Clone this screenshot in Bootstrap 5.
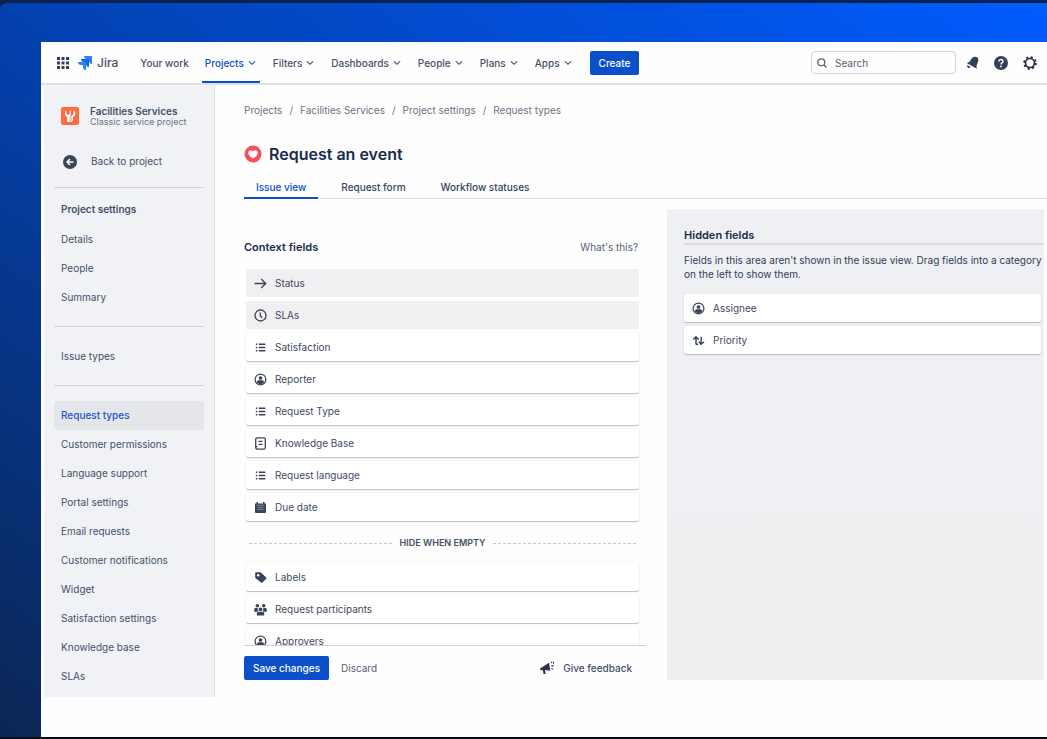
<!DOCTYPE html>
<html lang="en">
<head>
<meta charset="utf-8">
<meta name="viewport" content="width=device-width, initial-scale=1">
<title>Request an event - Request types - Jira</title>
<link href="https://cdn.jsdelivr.net/npm/bootstrap@5.3.0/dist/css/bootstrap.min.css" rel="stylesheet">
<style>
  :root { --ink: #44506a; --ink-strong: #172b4d; --ink-soft: #6b7485; --brand: #0b4fcb; --rule: #d9dbe0; }
  body { font-family: Inter, "Liberation Sans", sans-serif; font-size: 10px; line-height: 14px; color: var(--ink); background: #0a2350; }
  svg { display: block; flex: none; }
  a { color: inherit; text-decoration: none; }
  .stage { height: 100vh; min-height: 739px; padding: 39px 0 0 41px; border-top: 3px solid #0a2350; border-bottom: 2px solid #070c18;
    background: linear-gradient(to top right, #0b2654 0%, #0341b0 50%, #005cff 100%) padding-box; border-top-left-radius: 8px; }
  .app-shell { background: #fefefe; padding-bottom: 40px; }
  .fill { min-height: 0; flex: 1 1 0; }

  .topbar { height: 43px; padding: 0 10px 0 15px; border-bottom: 2px solid #dfe0e4; font-weight: 500; }
  .topbar .nav { gap: 10px; margin-left: 3px; }
  .topbar .nav-link { color: var(--ink); padding: 0 3px; gap: 3px; font-size: 10px; height: 41px; }
  .topbar .nav-link.active { color: var(--brand); box-shadow: inset 0 -2px var(--brand); }
  .brand-name { font-size: 12px; font-weight: 500; }
  .btn-jira { background: #0b4fcb; color: #fff; font-size: 10px; font-weight: 500; line-height: 16px; padding: 4px 9px; border-radius: 2px; border: 0; }
  .btn-jira:hover { background: #0747a6; color: #fff; }
  .tool-row { gap: 15px; }
  .search-box { width: 145px; height: 23px; border: 1px solid #cfd2d8; border-radius: 4px; padding: 0 5px; margin-right: -5px; }
  .search-box input { font-size: 10px; color: var(--ink); padding: 0; min-height: 0; line-height: 14px; }
  .search-box input::placeholder { color: #566075; opacity: 1; }
  .icon-btn { border: 0; background: none; padding: 0; color: #344057; }

  .sidebar { width: 171px; margin-left: 3px; padding: 20px 10px 5px; background: #f1f2f5; border-right: 1px solid #dedfe4; }
  .sidebar hr { margin: 14px 0 15px; border-top: 1px solid #d3d5da; opacity: 1; }
  .sidebar .lead-rule { margin: 11px 0 6px; }
  .sidebar .nav-link { color: var(--ink); padding: 0 7px; line-height: 29px; border-radius: 3px; }
  .sidebar .nav-link.active { background: #e5e6ea; color: #1e55cc; font-weight: 500; }
  .side-title { line-height: 31px; padding: 0 7px; font-size: 10px; font-weight: 600; margin: 0; }
  .project-head { padding: 0 7px; gap: 11px; }
  .project-name { font-weight: 600; line-height: 12px; }
  .project-kind { font-size: 9px; line-height: 10px; color: var(--ink-soft); white-space: nowrap; }

  .work { padding: 18px 3px 17px 29px; }
  .breadcrumb { --bs-breadcrumb-divider-color: #6b7485; --bs-breadcrumb-item-padding-x: 7px; font-size: 10px; color: var(--ink-soft); line-height: 14px; }
  .title-row { gap: 7px; }
  .page-title { font-size: 16px; line-height: 18px; font-weight: 600; color: var(--ink-strong); }
  .tab-row { border-bottom: 1px solid var(--rule); margin-right: -3px; gap: 11px; }
  .tab-row .nav-link { font-size: 10px; font-weight: 500; color: #344563; padding: 1px 12px 3px; line-height: 14px; border-bottom: 2px solid transparent; margin-bottom: -1px; }
  .tab-row .nav-link.active { color: var(--brand); border-bottom-color: var(--brand); }
  .panes { display: grid; grid-template-columns: minmax(0, 16fr) minmax(0, 15fr); grid-template-rows: minmax(0, 1fr); column-gap: 21px; padding-top: 10px; }
  .pane-title { font-size: 11px; line-height: 16px; font-weight: 600; color: var(--ink-strong); margin: 0; }
  .pane-head { padding: 30px 8px 0 0; }

  .field-list { gap: 4px; }
  .field-row { height: 28px; padding: 0 8px; gap: 8px; background: #fff; border-radius: 2px; box-shadow: 0 1px 1px #b9bcc4, 0 0 1px #c5c8cf; flex: none; color: #3d4963; }
  .field-row.fixed-field { background: #f0f0f3; box-shadow: none; }
  .field-row svg { color: #3a4458; }
  .scroll-pane { padding: 0 7px 0 2px; margin-top: 14px; border-bottom: 1px solid #cfd2d8; overflow: hidden; }
  .divider-label { font-size: 9px; font-weight: 600; line-height: 14px; margin: 15px 3px 13px; gap: 8px; }
  .divider-label::before, .divider-label::after { content: ""; flex: 1; border-top: 1px dashed #c4c7cf; }
  .action-row { padding: 10px 14px 0 0; }
  .link-btn { border: 0; background: none; padding: 0; color: #566075; font-size: 10px; }
  .feedback { font-weight: 500; color: var(--ink); }

  .hidden-pane { background: linear-gradient(#eff0f3, #eff0f4 60%, #eeeeee 75%); padding: 18px 3px 0 17px; }
  .hidden-pane .pane-title { border-bottom: 2px solid #dcdde1; margin-right: -3px; }
  .hidden-pane p { color: #2f3c58; line-height: 14px; margin: 8px -3px 13px 0; }
</style>
</head>
<body>
<!-- shared icon shapes -->
<svg class="d-none" aria-hidden="true">
  <symbol id="i-caret" viewBox="0 0 10 10"><path d="M2.200 3.700 5 6.300 7.800 3.700" fill="none" stroke="currentColor" stroke-width="1.100" stroke-linecap="round"/></symbol>
  <symbol id="i-list" viewBox="0 0 14 14"><path d="M2 3.500h1.600M2 7h1.600M2 10.500h1.600M5.200 3.500h7M5.200 7h7M5.200 10.500h7" stroke="currentColor" stroke-width="1.500"/></symbol>
  <symbol id="i-person" viewBox="0 0 14 14"><circle cx="7" cy="7" r="5.800" fill="none" stroke="currentColor" stroke-width="1.300"/><circle cx="7" cy="5.400" r="2" fill="currentColor"/><path d="M3.300 10.600V9.500c0-1 .9-1.600 1.900-1.600h3.600c1 0 1.900.6 1.900 1.600v1.100A5 5 0 0 1 7 12.200a5 5 0 0 1-3.700-1.600z" fill="currentColor"/></symbol>
</svg>

<div class="stage">
<div class="app-shell d-flex flex-column h-100">

  <header class="topbar d-flex align-items-center flex-shrink-0">
    <button class="icon-btn" aria-label="Switch apps"><svg width="14" height="14" viewBox="0 0 14 14" fill="currentColor"><path d="M1 1h3v3H1zM5.500 1h3v3h-3zM10 1h3v3h-3zM1 5.500h3v3H1zM5.500 5.500h3v3h-3zM10 5.500h3v3h-3zM1 10h3v3H1zM5.500 10h3v3h-3zM10 10h3v3h-3z"/></svg></button>
    <a href="#" class="d-flex align-items-center ms-2 me-3" aria-label="Jira home">
      <svg width="15" height="15" viewBox="0 0 15 15"><path d="M6 1h8v8c-1.900 0-3-1.200-3-3V4H9C7.200 4 6 2.900 6 1z" fill="#2684ff"/><path d="M3 4h8v8c-1.900 0-3-1.200-3-3V7H6C4.200 7 3 5.900 3 4z" fill="#1868e0"/><path d="M0 7h8v8c-1.900 0-3-1.200-3-3v-2H3c-1.800 0-3-1.100-3-3z" fill="#2684ff"/></svg>
      <span class="brand-name ms-1">Jira</span>
    </a>
    <nav class="nav flex-nowrap align-items-center" aria-label="Primary">
      <a class="nav-link d-flex align-items-center" href="#">Your work</a>
      <a class="nav-link d-flex align-items-center active" aria-current="page" href="#">Projects <svg width="10" height="10"><use href="#i-caret"/></svg></a>
      <a class="nav-link d-flex align-items-center" href="#">Filters <svg width="10" height="10"><use href="#i-caret"/></svg></a>
      <a class="nav-link d-flex align-items-center" href="#">Dashboards <svg width="10" height="10"><use href="#i-caret"/></svg></a>
      <a class="nav-link d-flex align-items-center" href="#">People <svg width="10" height="10"><use href="#i-caret"/></svg></a>
      <a class="nav-link d-flex align-items-center" href="#">Plans <svg width="10" height="10"><use href="#i-caret"/></svg></a>
      <a class="nav-link d-flex align-items-center" href="#">Apps <svg width="10" height="10"><use href="#i-caret"/></svg></a>
      <button class="btn btn-jira ms-1">Create</button>
    </nav>
    <div class="tool-row d-flex align-items-center ms-auto">
      <label class="search-box d-flex align-items-center gap-2">
        <svg width="10" height="10" viewBox="0 0 10 10" fill="none" stroke="#566075" stroke-width="1.200"><circle cx="4.300" cy="4.300" r="3.500"/><path d="m7 7 2.500 2.500"/></svg>
        <input class="form-control border-0 bg-transparent shadow-none" type="search" placeholder="Search" aria-label="Search">
      </label>
      <button class="icon-btn" aria-label="Notifications"><svg width="13" height="14" viewBox="0 0 13 14" fill="currentColor"><path d="M11.200 1.300c1.100.8 1.500 2.800.9 4.500L10.500 9.800l.3 3L.7 6.900l2.600-1 2.600-3.700c1.300-1.500 4-2 5.300-.9zM1.400 9l3.200 1.900c-.6 1-1.700 1.400-2.500.9-.8-.5-1.200-1.700-.7-2.800z"/></svg></button>
      <button class="icon-btn" aria-label="Help"><svg width="14" height="14" viewBox="0 0 14 14"><circle cx="7" cy="7" r="7" fill="currentColor"/><path d="M5 5.600C5 4.300 5.800 3.500 7 3.500s2 .8 2 1.900c0 1.500-2 1.500-2 3" fill="none" stroke="#fff" stroke-width="1.400"/><circle cx="7" cy="10.500" r=".9" fill="#fff"/></svg></button>
      <button class="icon-btn" aria-label="Settings"><svg width="14" height="14" viewBox="0 0 14 14" fill="none" stroke="#20283a"><circle cx="7" cy="7" r="4.500" stroke-width="1.600"/><circle cx="7" cy="7" r="5.900" stroke-width="1.700" stroke-dasharray="2.200 2.430"/></svg></button>
    </div>
  </header>

  <div class="fill d-flex">
    <aside class="sidebar flex-shrink-0">
      <div class="project-head d-flex align-items-center">
        <svg width="18" height="18" viewBox="0 0 18 18"><rect width="18" height="18" rx="2" fill="#ff6b3d"/><path d="M5.500 3.200v3.600l1.800 1.300 1.500-1.300V3.600h1.200v3.200c0 1.300-.7 2.400-1.700 3V15H6.200V9.900C4.800 9.300 3.900 8 3.900 6.400c0-1.400.6-2.500 1.600-3.200z" fill="#fff"/><path d="M12.600 3.200c1 .7 1.700 1.800 1.700 3.200 0 1.600-1 3-2.500 3.600V13c0 1.200-.8 2-1.800 2s-1.700-.8-1.700-2V9.800l2.100-.6 2.200-2.100z" fill="#fff"/><path d="M9.300 9.500h1.300v4.700H9.300z" fill="#a9b7c9"/></svg>
        <div>
          <div class="project-name">Facilities Services</div>
          <div class="project-kind">Classic service project</div>
        </div>
      </div>
      <a href="#" class="nav-link d-flex align-items-center mt-3 pt-1">
        <svg class="me-2" width="18" height="14" viewBox="0 0 18 14"><circle cx="9" cy="7" r="7" fill="#3b465c"/><path d="M12.500 7H6.200M9 4 6 7l3 3" fill="none" stroke="#fff" stroke-width="1.500"/></svg>
        <span class="ps-1">Back to project</span>
      </a>
      <hr class="lead-rule">
      <h2 class="side-title">Project settings</h2>
      <nav class="nav flex-column">
        <a class="nav-link" href="#">Details</a>
        <a class="nav-link" href="#">People</a>
        <a class="nav-link" href="#">Summary</a>
      </nav>
      <hr>
      <nav class="nav flex-column"><a class="nav-link" href="#">Issue types</a></nav>
      <hr>
      <nav class="nav flex-column">
        <a class="nav-link active" aria-current="page" href="#">Request types</a>
        <a class="nav-link" href="#">Customer permissions</a>
        <a class="nav-link" href="#">Language support</a>
        <a class="nav-link" href="#">Portal settings</a>
        <a class="nav-link" href="#">Email requests</a>
        <a class="nav-link" href="#">Customer notifications</a>
        <a class="nav-link" href="#">Widget</a>
        <a class="nav-link" href="#">Satisfaction settings</a>
        <a class="nav-link" href="#">Knowledge base</a>
        <a class="nav-link" href="#">SLAs</a>
      </nav>
    </aside>

    <main class="work fill d-flex flex-column">
      <nav aria-label="Breadcrumb">
        <ol class="breadcrumb mb-0">
          <li class="breadcrumb-item"><a href="#">Projects</a></li>
          <li class="breadcrumb-item"><a href="#">Facilities Services</a></li>
          <li class="breadcrumb-item"><a href="#">Project settings</a></li>
          <li class="breadcrumb-item"><a href="#">Request types</a></li>
        </ol>
      </nav>
      <div class="title-row d-flex align-items-center mt-4 pt-1 mb-3">
        <svg width="18" height="18" viewBox="0 0 18 18"><circle cx="9" cy="9" r="8.500" fill="#f6505f"/><path d="M9 13.600C6.200 11.600 4.200 10 4.200 7.700c0-1.400 1-2.400 2.400-2.400 1 0 1.800.4 2.400 1.200.6-.8 1.400-1.200 2.400-1.200 1.400 0 2.400 1 2.400 2.400 0 2.300-2 3.900-4.800 5.900z" fill="#fff"/></svg>
        <h1 class="page-title mb-0">Request an event</h1>
      </div>
      <nav class="tab-row nav" aria-label="Views">
        <a class="nav-link active" aria-current="page" href="#">Issue view</a>
        <a class="nav-link" href="#">Request form</a>
        <a class="nav-link" href="#">Workflow statuses</a>
      </nav>

      <div class="panes fill">
        <section class="d-flex flex-column">
          <div class="pane-head d-flex justify-content-between align-items-center">
            <h2 class="pane-title">Context fields</h2>
            <a href="#" class="link-btn">What's this?</a>
          </div>
          <div class="scroll-pane fill">
            <div class="field-list d-flex flex-column">
              <div class="field-row fixed-field d-flex align-items-center"><svg width="13" height="13" viewBox="0 0 13 13" fill="none" stroke="currentColor" stroke-width="1.300"><path d="M.5 6.500h11M7.200 2l4.500 4.500L7.200 11"/></svg>Status</div>
              <div class="field-row fixed-field d-flex align-items-center"><svg width="13" height="13" viewBox="0 0 13 13" fill="none" stroke="currentColor" stroke-width="1.300"><circle cx="6.500" cy="6.500" r="5.500"/><path d="M6.300 3.500v3.200L8.200 8.800"/></svg>SLAs</div>
              <div class="field-row d-flex align-items-center"><svg width="13" height="13"><use href="#i-list"/></svg>Satisfaction</div>
              <div class="field-row d-flex align-items-center"><svg width="13" height="13"><use href="#i-person"/></svg>Reporter</div>
              <div class="field-row d-flex align-items-center"><svg width="13" height="13"><use href="#i-list"/></svg>Request Type</div>
              <div class="field-row d-flex align-items-center"><svg width="13" height="13" viewBox="0 0 13 13" fill="none" stroke="currentColor" stroke-width="1.300"><path d="M3.500.8h6.300c.9 0 1.500.6 1.500 1.500v8.400c0 .9-.6 1.500-1.500 1.500H3.500c-1 0-1.800-.7-1.800-1.700V2.600c0-1 .8-1.800 1.800-1.800zM2 9.700h1.500M4.500 4.300h4M4.500 7.300h4"/></svg>Knowledge Base</div>
              <div class="field-row d-flex align-items-center"><svg width="13" height="13"><use href="#i-list"/></svg>Request language</div>
              <div class="field-row d-flex align-items-center"><svg width="13" height="13" viewBox="0 0 13 13"><path d="M1 2.500h1.500V1H4v1.500h5V1h1.500v1.500H12V11c0 .6-.4 1-1 1H2c-.6 0-1-.4-1-1z" fill="currentColor"/><path d="M2.500 4.300h8M3.500 6.500h6M3.500 8.500h6" stroke="#8d95a5" stroke-width=".8"/></svg>Due date</div>
            </div>
            <div class="divider-label d-flex align-items-center">HIDE WHEN EMPTY</div>
            <div class="field-list d-flex flex-column">
              <div class="field-row d-flex align-items-center"><svg width="13" height="13" viewBox="0 0 13 13"><path d="M1.200 2.500c0-.7.500-1.200 1.200-1.200h3.800c.4 0 .7.100 1 .4l5 4.700c.4.400.4 1 0 1.400l-3.700 3.700c-.4.400-1 .4-1.400 0L1.600 7.300c-.3-.3-.4-.6-.4-1z" fill="currentColor"/><circle cx="4.200" cy="4.200" r="1.200" fill="#fff"/></svg>Labels</div>
              <div class="field-row d-flex align-items-center"><svg width="13" height="13" viewBox="0 0 13 13" fill="currentColor"><circle cx="3.300" cy="2.800" r="1.800"/><circle cx="9.700" cy="2.800" r="1.800"/><path d="M.2 8.700V6.300C.2 5.500.9 4.900 1.700 4.900h2.200c-.6 1.300-.2 2.500.5 3.200l-.8.700H.6zM12.800 8.700V6.300c0-.8-.7-1.400-1.500-1.400H9.100c.6 1.300.2 2.500-.5 3.200l.8.700h3z"/><circle cx="6.500" cy="6.300" r="1.900"/><path d="M2.800 12.500v-2c0-1 .7-1.700 1.700-1.700h4c1 0 1.700.7 1.700 1.700v2z"/></svg>Request participants</div>
              <div class="field-row d-flex align-items-center"><svg width="13" height="13"><use href="#i-person"/></svg>Approvers</div>
            </div>
          </div>
          <div class="action-row d-flex align-items-center">
            <button class="btn btn-jira">Save changes</button>
            <button class="link-btn ms-2 ps-1">Discard</button>
            <button class="link-btn feedback d-flex align-items-center gap-2 ms-auto"><svg width="15" height="14" viewBox="0 0 15 14" fill="#2c3547"><path d="M0 7.500 9 1.800l1.300 8-5.300-.7.700 3.700-2 .5-1-4.400L.5 9.300zM10.700 1.500 12 .3l.5.900-1.200 1.100zM11.300 4.300h2.500v1.200h-2.500zM11.300 7l2 .7-.4 1-1.700-.6zM13 .8h1v2h-1z"/></svg>Give feedback</button>
          </div>
        </section>

        <section class="hidden-pane">
          <h2 class="pane-title">Hidden fields</h2>
          <p>Fields in this area aren't shown in the issue view. Drag fields into a category on the left to show them.</p>
          <div class="field-list d-flex flex-column">
            <div class="field-row d-flex align-items-center"><svg width="13" height="13"><use href="#i-person"/></svg>Assignee</div>
            <div class="field-row d-flex align-items-center"><svg width="13" height="13" viewBox="0 0 13 13" fill="none" stroke="currentColor" stroke-width="1.400"><path d="M4 10.500V3M1.300 5.500 4 2.800l2.700 2.700M4 10.200h2.200M9.200 2.800v7.500M6.800 7.800l2.400 2.500L12 7.800"/></svg>Priority</div>
          </div>
        </section>
      </div>
    </main>
  </div>
</div>
</div>
<script src="https://cdn.jsdelivr.net/npm/bootstrap@5.3.0/dist/js/bootstrap.bundle.min.js"></script>
</body>
</html>
